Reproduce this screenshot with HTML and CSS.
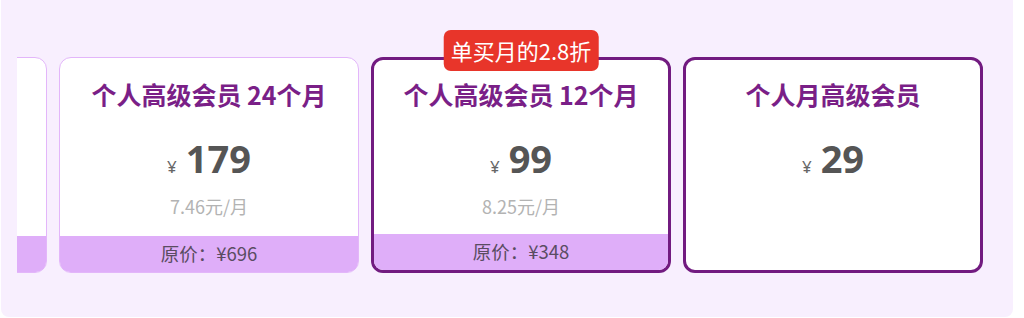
FILE: index.html
```html
<!DOCTYPE html>
<html lang="zh-CN">
<head>
<meta charset="utf-8">
<link rel="stylesheet" href="styles.css">
</head>
<body>
<div class="panel">
  <div class="track">
    <div class="cards">
      <div class="card card-light">
        <div class="orig"></div>
      </div>
      <div class="card card-light">
        <div class="title">个人高级会员 24个月</div>
        <div class="price"><span class="yen">¥</span><span class="num">179</span></div>
        <div class="per">7.46元/月</div>
        <div class="orig">原价：¥696</div>
      </div>
      <div class="card card-dark">
        <div class="badge">单买月的2.8折</div>
        <div class="title">个人高级会员 12个月</div>
        <div class="price"><span class="yen">¥</span><span class="num">99</span></div>
        <div class="per">8.25元/月</div>
        <div class="orig">原价：¥348</div>
      </div>
      <div class="card card-dark">
        <div class="title">个人月高级会员</div>
        <div class="price"><span class="yen">¥</span><span class="num">29</span></div>
      </div>
    </div>
  </div>
</div>
</body>
</html>
```
FILE: styles.css
```css
html, body {
  margin: 0;
  padding: 0;
  background: #ffffff;
}
body {
  width: 1024px;
  height: 318px;
  overflow: hidden;
  font-family: "Noto Sans", "Noto Sans CJK SC", sans-serif;
}
.panel {
  margin-left: 1px;
  width: 1012px;
  height: 317px;
  background: #f8effe;
  border-radius: 0 0 8px 8px;
  padding: 30px 16px 0 16px;
  box-sizing: border-box;
}
.track {
  overflow: hidden;
  padding-top: 27px;
  height: 250px;
}
.cards {
  display: flex;
  gap: 12px;
  margin-left: -270px;
}
.card {
  position: relative;
  flex: 0 0 300px;
  width: 300px;
  height: 216px;
  box-sizing: border-box;
  background: #ffffff;
  border-radius: 12px;
  display: flex;
  flex-direction: column;
  align-items: center;
}
.card-light {
  border: 1.5px solid #e3b6fa;
  padding-top: 18.5px;
}
.card-dark {
  border: 3px solid #721b80;
  padding-top: 17px;
}
.title {
  font-family: "Noto Sans CJK SC", sans-serif;
  font-weight: 700;
  font-size: 25px;
  line-height: 34px;
  color: #7a1f87;
  white-space: nowrap;
}
.price {
  margin-top: 24px;
  display: flex;
  align-items: baseline;
  gap: 9px;
  height: 46px;
  line-height: 46px;
}
.yen {
  font-family: "Noto Sans", sans-serif;
  font-size: 17px;
  color: #666666;
}
.num {
  font-family: "Noto Sans", sans-serif;
  font-weight: 700;
  font-size: 38px;
  color: #555555;
}
.per {
  margin-top: 13px;
  font-family: "Noto Sans CJK SC", sans-serif;
  font-size: 18px;
  line-height: 24px;
  color: #b3b3b3;
}
.orig {
  margin-top: auto;
  align-self: stretch;
  height: 36px;
  line-height: 34px;
  text-align: center;
  background: #dfaef9;
  font-family: "Noto Sans CJK SC", sans-serif;
  font-size: 18.5px;
  color: #5a4c62;
  border-radius: 0 0 10px 10px;
}
.card-dark .orig {
  border-radius: 0 0 9px 9px;
}
.badge {
  position: absolute;
  top: -30px;
  left: 50%;
  transform: translateX(-50%);
  background: #e8352a;
  color: #ffffff;
  font-family: "Noto Sans CJK SC", sans-serif;
  font-size: 22px;
  line-height: 41px;
  height: 41px;
  padding: 0 7px;
  border-radius: 7px;
  white-space: nowrap;
}
```
